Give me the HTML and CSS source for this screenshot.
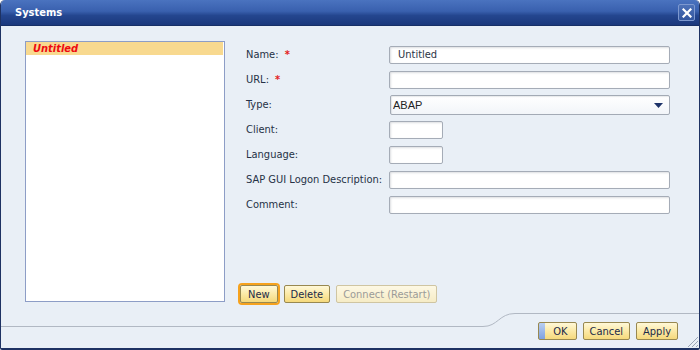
FILE: index.html
```html
<!DOCTYPE html>
<html lang="en">
<head>
    <meta charset="UTF-8">
    <title>Systems</title>
    <link rel="stylesheet" href="styles.css">
</head>
<body>
    <div class="window">
        <div class="titlebar">
            <span class="title">Systems</span>
            <button class="close-button" title="Close">
                <svg width="10" height="10" viewBox="0 0 10 10">
                    <path d="M1.5 1.5 L8.5 8.5 M8.5 1.5 L1.5 8.5" stroke="#fff" stroke-width="2.2" stroke-linecap="square"/>
                </svg>
            </button>
        </div>

        <div class="content">
            <div class="system-list">
                <div class="list-item selected">Untitled</div>
            </div>

            <div class="details">
                <div class="form">
                    <div class="row">
                        <label>Name: <span class="req">*</span></label>
                        <input class="field" type="text" value="Untitled">
                    </div>
                    <div class="row">
                        <label>URL: <span class="req">*</span></label>
                        <input class="field" type="text">
                    </div>
                    <div class="row">
                        <label>Type:</label>
                        <div class="select-wrap">
                            <select class="select">
                                <option>ABAP</option>
                            </select>
                            <svg class="select-arrow" width="9" height="5" viewBox="0 0 9 5">
                                <path d="M0 0 H9 L4.5 5 Z" fill="#1d3369"/>
                            </svg>
                        </div>
                    </div>
                    <div class="row">
                        <label>Client:</label>
                        <input class="field short" type="text">
                    </div>
                    <div class="row">
                        <label>Language:</label>
                        <input class="field short" type="text">
                    </div>
                    <div class="row">
                        <label>SAP GUI Logon Description:</label>
                        <input class="field" type="text">
                    </div>
                    <div class="row">
                        <label>Comment:</label>
                        <input class="field" type="text">
                    </div>
                </div>

                <div class="actions">
                    <button class="btn focused">New</button>
                    <button class="btn">Delete</button>
                    <button class="btn" disabled>Connect (Restart)</button>
                </div>
            </div>
        </div>

        <div class="footer">
            <svg class="divider" width="698" height="30" viewBox="0 0 698 30">
                <path d="M0 24.5 H482 C497 24.5 498 11.5 514 11.5 H698" fill="none" stroke="#b1b8c3" stroke-width="1"/>
            </svg>
            <div class="footer-buttons">
                <button class="btn default">OK</button>
                <button class="btn">Cancel</button>
                <button class="btn">Apply</button>
            </div>
            <svg class="grip" width="13" height="13" viewBox="0 0 13 13">
                <path d="M12 2 L2 12 M12 6 L6 12 M12 10 L10 12" stroke="#9ba6b7" stroke-width="1"/>
            </svg>
        </div>
    </div>
</body>
</html>
```

FILE: styles.css
```css
body {
    margin: 0;
    background: #fff;
    font-family: "DejaVu Sans", Verdana, sans-serif;
    font-stretch: condensed;
    font-size: 11px;
    color: #263246;
}

.window {
    width: 700px;
    height: 350px;
    box-sizing: border-box;
    display: flex;
    flex-direction: column;
    background: #e9eff6;
    border: 1px solid #1e3263;
    border-top: none;
    border-bottom-width: 2px;
    border-radius: 5px 5px 2px 2px;
    overflow: hidden;
}

.titlebar {
    height: 26px;
    flex-shrink: 0;
    display: flex;
    align-items: center;
    justify-content: space-between;
    padding: 0 4px 0 14px;
    background: linear-gradient(#4a73bf 0%, #3960ae 45%, #24468f 62%, #1b387c 100%);
    border-bottom: 1px solid #172f66;
    box-sizing: border-box;
}

.title {
    color: #fff;
    font-weight: bold;
    font-size: 11px;
}

.close-button {
    width: 17px;
    height: 17px;
    padding: 0;
    display: flex;
    align-items: center;
    justify-content: center;
    background: linear-gradient(#4e72b8, #33569f);
    border: 1px solid #7d98cf;
    border-radius: 2px;
    cursor: pointer;
}

.content {
    display: flex;
    padding: 15px 0 0 24px;
}

.system-list {
    width: 200px;
    height: 261px;
    box-sizing: border-box;
    background: #fff;
    border: 1px solid #8d9dc6;
}

.list-item {
    height: 13px;
    line-height: 13px;
    padding-left: 7px;
    margin-right: 1px;
}

.list-item.selected {
    background: #f8d98f;
    color: #ee0a10;
    font-weight: bold;
    font-style: italic;
}

.details {
    display: flex;
    flex-direction: column;
    margin-left: 13px;
}

.form {
    padding: 1px 0 0 8px;
}

.row {
    height: 25px;
    display: flex;
    align-items: center;
}

.row label {
    width: 143px;
    flex-shrink: 0;
}

.req {
    color: #e3221c;
    font-weight: bold;
    margin-left: 3px;
}

.field {
    width: 281px;
    height: 18px;
    box-sizing: border-box;
    margin: 0;
    padding: 0 8px;
    border: 1px solid #a5acb7;
    border-radius: 2px;
    background: #fff;
    box-shadow: inset 1px 1px 2px rgba(60, 70, 90, 0.18);
    font-family: inherit;
    font-stretch: condensed;
    font-size: 11px;
    color: #2b3445;
}

.field.short {
    width: 54px;
}

.select-wrap {
    position: relative;
    margin-left: 1px;
}

.select {
    width: 280px;
    height: 20px;
    margin: 0;
    padding: 0 0 0 2px;
    appearance: none;
    -webkit-appearance: none;
    border: 1px solid #a3aab5;
    border-radius: 2px;
    background: linear-gradient(#fff, #f2f5f9);
    box-shadow: inset 1px 1px 1px rgba(60, 70, 90, 0.12);
    font-family: "Liberation Sans", Arial, sans-serif;
    font-size: 11px;
    color: #222;
}

.select-arrow {
    position: absolute;
    right: 7px;
    top: 8px;
}

.actions {
    display: flex;
    gap: 6px;
    margin-top: auto;
    padding-left: 2px;
    margin-bottom: -1px;
}

.btn {
    height: 18px;
    box-sizing: border-box;
    margin: 0;
    padding: 0 6px;
    border: 1px solid #988850;
    border-radius: 2px;
    background: linear-gradient(#fff8d8 0%, #fcebab 45%, #f5d97c 100%);
    font-family: "DejaVu Sans", Verdana, sans-serif;
    font-stretch: condensed;
    font-size: 11px;
    color: #1c2a48;
    cursor: pointer;
}

.btn.focused {
    box-shadow: 0 0 0 2px #f6a21e;
    padding: 0 7px;
}

.btn:disabled {
    color: #9b9b98;
    border-color: #cfc5a2;
    background: linear-gradient(#fdf8e4, #f6ecc6);
    cursor: default;
}

.btn.default {
    padding: 0 8px 0 14px;
    background:
        linear-gradient(#b9cff2, #7fa1df) left / 6px 100% no-repeat,
        linear-gradient(#fff8d8 0%, #fcebab 45%, #f5d97c 100%);
}

.footer {
    flex: 1;
    position: relative;
}

.divider {
    position: absolute;
    top: 0;
    left: 0;
}

.footer-buttons {
    display: flex;
    justify-content: flex-end;
    gap: 6px;
    padding: 20px 21px 0 0;
}

.grip {
    position: absolute;
    right: 0;
    bottom: 0;
}
```
